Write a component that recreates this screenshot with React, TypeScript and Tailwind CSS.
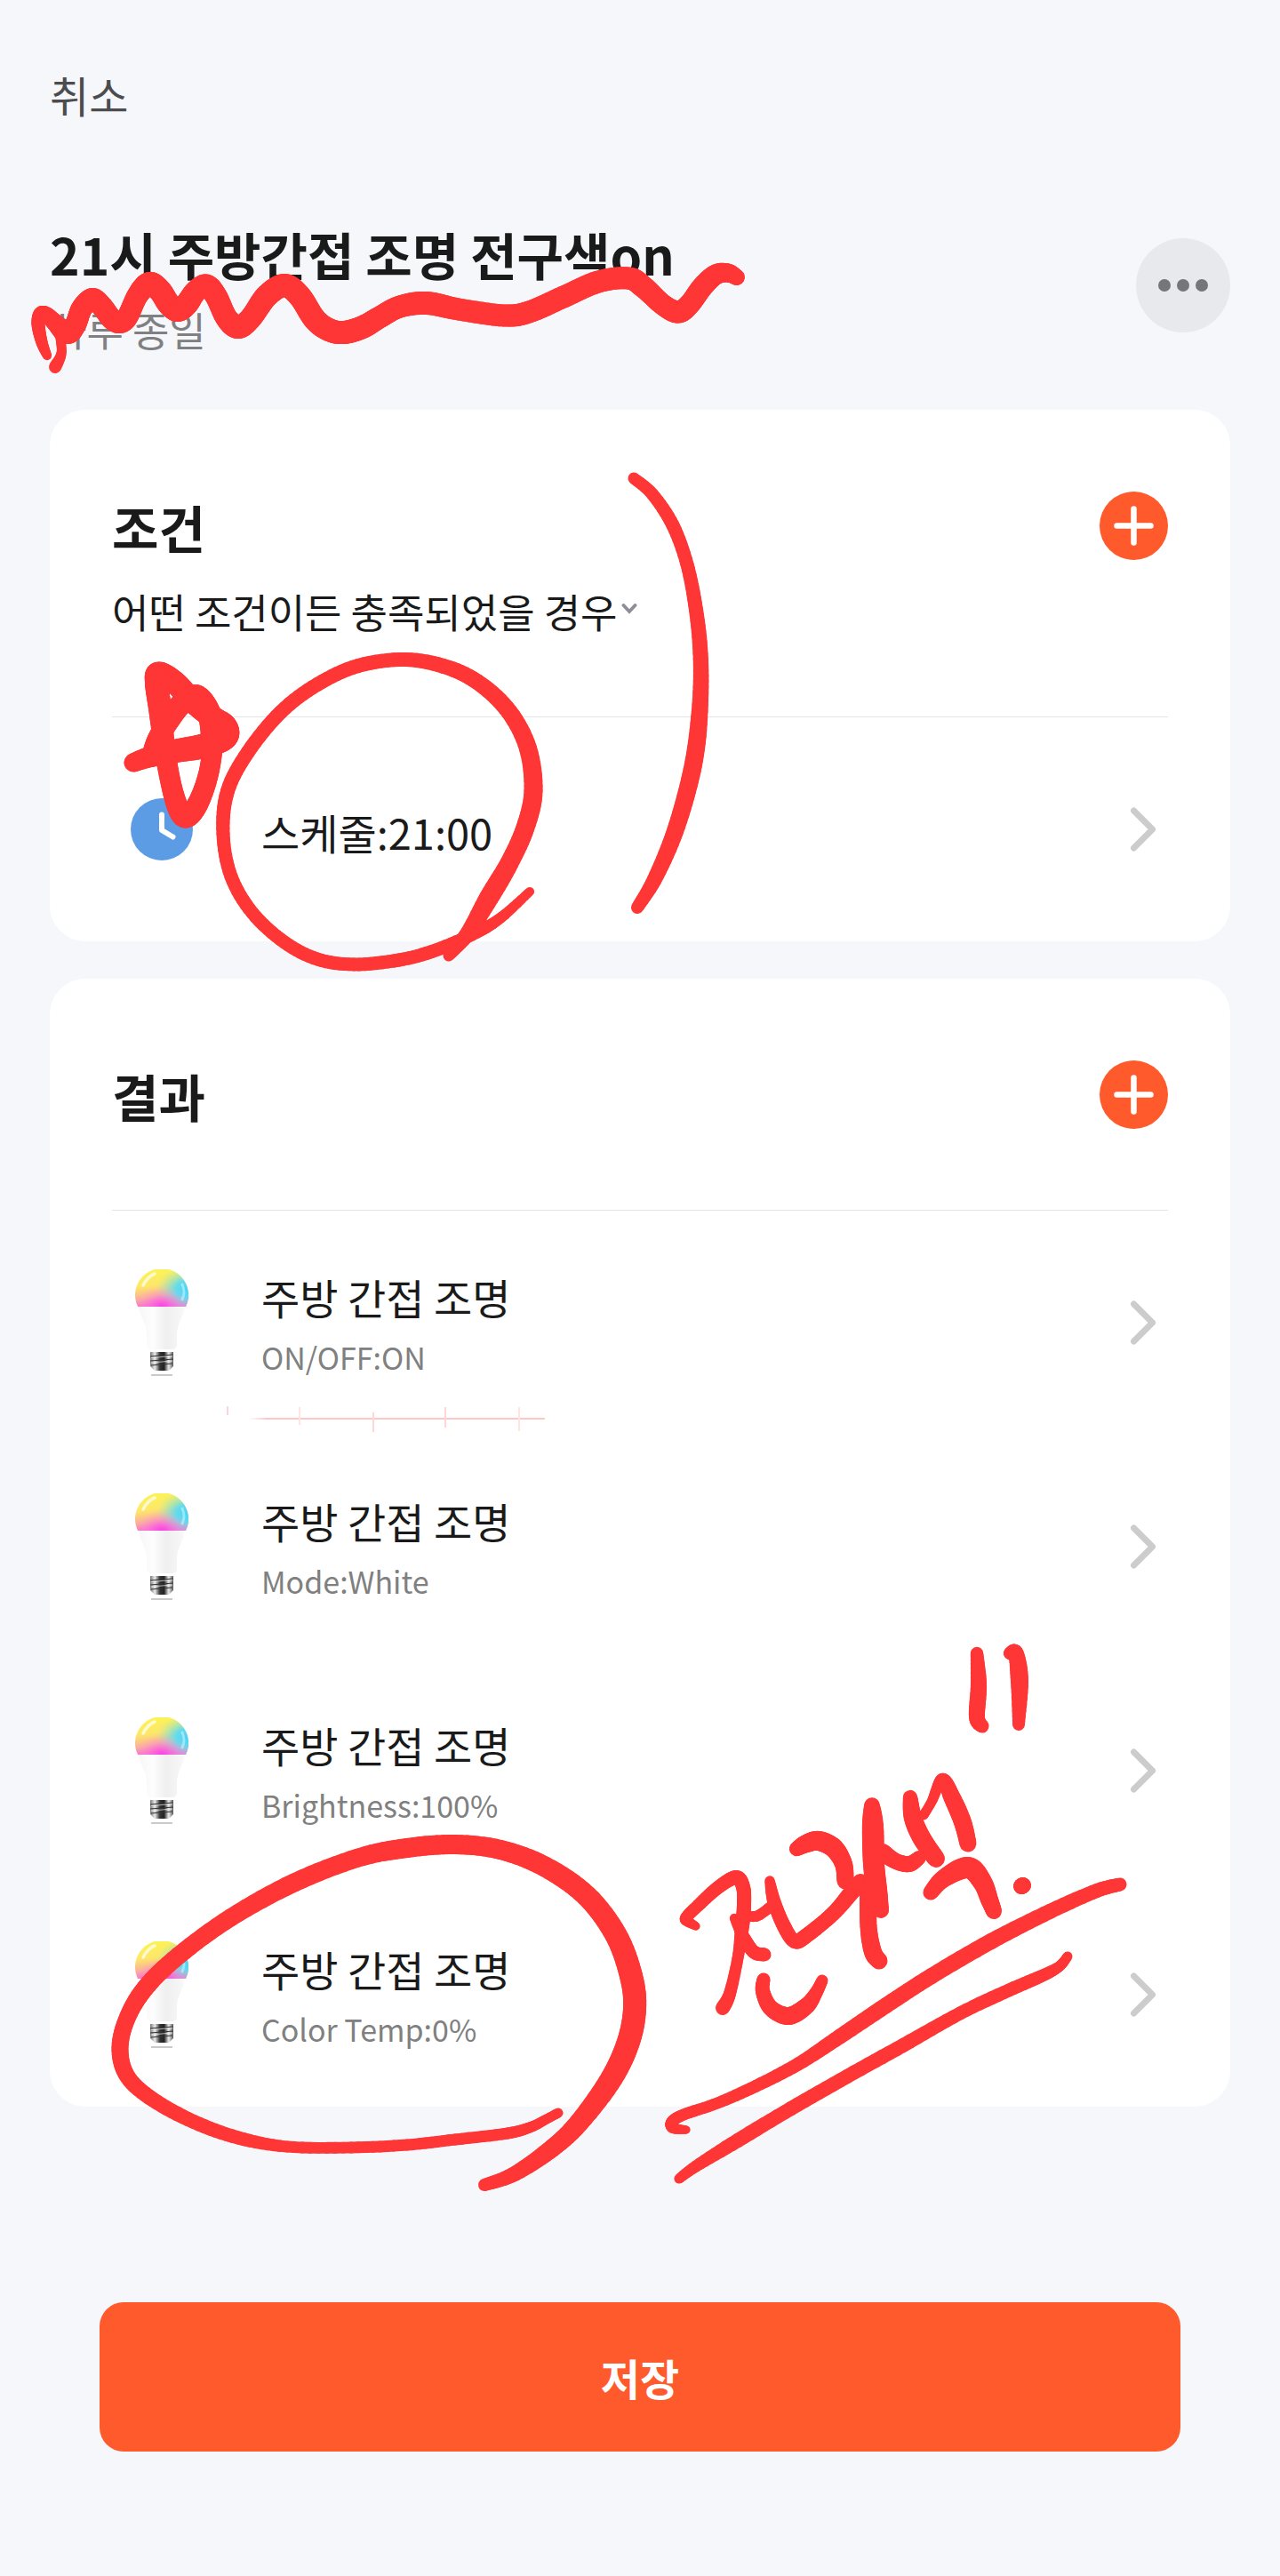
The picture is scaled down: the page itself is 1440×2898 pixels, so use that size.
import React, { useState } from 'react';

interface SceneAction {
  id: number;
  name: string;
  detail: string;
}

type InkPoint = [number, number, number];

const actions: SceneAction[] = [
  { id: 1, name: '주방 간접 조명', detail: 'ON/OFF:ON' },
  { id: 2, name: '주방 간접 조명', detail: 'Mode:White' },
  { id: 3, name: '주방 간접 조명', detail: 'Brightness:100%' },
  { id: 4, name: '주방 간접 조명', detail: 'Color Temp:0%' },
];

// pen strokes as [x, y, pen width]
const strokes: InkPoint[][] = [
  // wave over the title
  [[53, 400, 10], [47, 385, 13], [43, 365, 15], [45, 353, 15], [52, 353, 16], [63, 364, 20], [76, 375, 24], [85, 365, 24], [92, 347, 24], [104, 336, 24], [115, 345, 24], [125, 358, 24], [134, 363, 24], [143, 357, 24], [155, 332, 24], [168, 319, 26], [180, 327, 26], [190, 342, 26], [200, 349, 26], [210, 342, 26], [220, 328, 25], [232, 321, 25], [243, 333, 25], [255, 358, 25], [268, 368, 26], [282, 358, 25], [300, 333, 26], [320, 321, 26], [337, 333, 26], [354, 359, 26], [370, 371, 26], [387, 374, 26], [408, 368, 26], [427, 357, 25], [450, 345, 25], [480, 341, 26], [516, 348, 25], [567, 355, 25], [595, 351, 25], [634, 334, 25], [673, 317, 25], [707, 313, 25], [724, 323, 25], [746, 343, 24], [763, 351, 25], [776, 342, 24], [790, 323, 24], [805, 309, 23], [819, 307, 21], [829, 312, 18]],
  [[68, 380, 11], [69, 398, 11], [62, 413, 14]],
  // closing bracket
  [[713, 538, 13], [734, 556, 14], [757, 591, 15], [773, 635, 15], [783, 686, 16], [788, 735, 17], [788, 786, 18], [783, 842, 20], [773, 890, 20], [757, 942, 19], [736, 990, 17], [717, 1021, 14]],
  // star
  [[150, 858, 21], [167, 852, 23], [197, 845, 26], [230, 839, 28], [252, 829, 30], [252, 818, 30], [240, 808, 27], [218, 790, 26], [197, 768, 26], [179, 758, 27], [176, 768, 26], [180, 797, 26], [185, 840, 24], [192, 880, 23], [200, 908, 24], [209, 919, 25], [221, 907, 24], [232, 880, 23], [238, 850, 23], [238, 817, 26], [233, 797, 26], [220, 783, 26], [204, 792, 25], [189, 812, 24], [176, 834, 23], [169, 852, 20]],
  // circle around the schedule
  [[596, 1003, 10], [564, 1032, 12], [536, 1049, 14], [490, 1069, 15], [449, 1080, 15], [398, 1085, 15], [357, 1079, 15], [320, 1060, 15], [284, 1027, 15], [260, 986, 15], [251, 938, 15], [256, 890, 16], [279, 846, 16], [316, 801, 16], [357, 770, 16], [403, 749, 16], [456, 742, 16], [504, 751, 17], [541, 770, 18], [573, 801, 19], [594, 842, 20], [600, 890, 21], [591, 931, 21], [573, 971, 21], [550, 1010, 22], [527, 1049, 18], [505, 1075, 13]],
  // circle around the color temperature
  [[628, 2377, 11], [613, 2385, 11], [597, 2393, 12], [571, 2400, 13], [512, 2407, 13], [458, 2413, 13], [395, 2416, 13], [323, 2415, 13], [268, 2405, 15], [218, 2387, 16], [172, 2362, 17], [144, 2337, 18], [135, 2307, 19], [142, 2273, 19], [163, 2237, 20], [201, 2200, 20], [260, 2157, 20], [331, 2118, 21], [403, 2090, 21], [458, 2079, 22], [512, 2075, 22], [563, 2081, 22], [613, 2100, 23], [660, 2133, 24], [693, 2177, 25], [710, 2223, 26], [714, 2260, 26], [706, 2300, 26], [685, 2343, 25], [647, 2393, 22], [613, 2423, 20], [576, 2447, 17], [545, 2458, 14]],
  // quote marks
  [[1099, 1860, 14], [1101, 1896, 18], [1099, 1932, 18], [1105, 1942, 15]],
  [[1136, 1860, 14], [1143, 1860, 17], [1147, 1892, 20], [1146, 1940, 14]],
  // handwritten note
  [[783, 2167, 9], [773, 2161, 12], [772, 2157, 13], [783, 2146, 14], [807, 2124, 15], [828, 2112, 16], [836, 2123, 16], [837, 2143, 16], [835, 2167, 16], [830, 2203, 13], [821, 2243, 14], [813, 2259, 16]],
  [[826, 2158, 10], [837, 2180, 14], [848, 2196, 15], [860, 2199, 15]],
  [[843, 2156, 12], [853, 2155, 12], [867, 2145, 12]],
  [[866, 2116, 11], [871, 2140, 15], [882, 2167, 16], [894, 2184, 16], [908, 2177, 17], [937, 2153, 17], [957, 2130, 18], [968, 2117, 18]],
  [[977, 2123, 20], [977, 2167, 19], [982, 2196, 20], [989, 2206, 19]],
  [[859, 2227, 15], [858, 2240, 16], [867, 2259, 18], [887, 2268, 20], [907, 2257, 19], [918, 2242, 15], [925, 2228, 13]],
  [[896, 2080, 16], [907, 2074, 20], [921, 2071, 22], [938, 2079, 22], [949, 2097, 20], [951, 2116, 19]],
  [[981, 2031, 17], [982, 2057, 24], [983, 2097, 24], [987, 2130, 23], [991, 2149, 18]],
  [[993, 2084, 20], [1008, 2094, 18], [1023, 2097, 18], [1034, 2090, 16]],
  [[1024, 2022, 16], [1027, 2045, 20], [1037, 2068, 21], [1053, 2091, 20]],
  [[1039, 2042, 11], [1048, 2027, 11], [1060, 2002, 14], [1071, 2022, 19], [1083, 2050, 20], [1089, 2074, 19]],
  [[1047, 2129, 17], [1062, 2113, 20], [1089, 2101, 24], [1105, 2117, 22], [1113, 2137, 20], [1118, 2150, 18]],
  [[1149, 2122, 18], [1151, 2121, 18]],
  // double underline
  [[772, 2396, 9], [757, 2394, 12], [756, 2387, 13], [769, 2379, 13], [807, 2366, 13], [850, 2347, 14], [898, 2322, 15], [945, 2291, 17], [997, 2256, 18], [1048, 2223, 18], [1115, 2184, 18], [1182, 2150, 17], [1234, 2127, 16], [1260, 2120, 15]],
  [[764, 2451, 11], [783, 2437, 13], [830, 2408, 16], [890, 2372, 16], [953, 2336, 16], [1016, 2301, 16], [1080, 2265, 15], [1135, 2239, 15], [1174, 2222, 14], [1192, 2212, 12], [1201, 2201, 11]],
];

// Catmull-Rom through the points, pen width included
const smooth = (points: InkPoint[], steps = 8): InkPoint[] => {
  const out: InkPoint[] = [];
  for (let i = 0; i < points.length - 1; i++) {
    const p0 = points[Math.max(i - 1, 0)];
    const p1 = points[i];
    const p2 = points[i + 1];
    const p3 = points[Math.min(i + 2, points.length - 1)];
    for (let s = 0; s < steps; s++) {
      const t = s / steps;
      out.push(
        [0, 1, 2].map(
          (k) =>
            0.5 *
            (2 * p1[k] +
              (p2[k] - p0[k]) * t +
              (2 * p0[k] - 5 * p1[k] + 4 * p2[k] - p3[k]) * t * t +
              (3 * p1[k] - p0[k] - 3 * p2[k] + p3[k]) * t * t * t)
        ) as InkPoint
      );
    }
  }
  out.push(points[points.length - 1]);
  return out;
};

const InkStroke: React.FC<{ points: InkPoint[] }> = ({ points }) => {
  const pts = smooth(points);
  return (
    <g>
      {pts.slice(1).map((p, i) => (
        <line key={i} x1={pts[i][0]} y1={pts[i][1]} x2={p[0]} y2={p[1]} strokeWidth={p[2]} />
      ))}
    </g>
  );
};

const InkLayer: React.FC = () => (
  <svg
    className="absolute top-0 left-0 w-full pointer-events-none"
    viewBox="0 0 1440 2898"
    fill="none"
    aria-hidden="true"
  >
    <defs>
      <linearGradient id="guide" gradientUnits="userSpaceOnUse" x1="280" y1="0" x2="300" y2="0">
        <stop offset="0" stopColor="#ffc6c6" stopOpacity="0" />
        <stop offset="1" stopColor="#ffc6c6" />
      </linearGradient>
    </defs>
    <rect x="280" y="1595" width="333" height="2" fill="url(#guide)" />
    <path d="M256 1582v10M420 1589v22M501 1583v23" stroke="#ffd6d6" strokeWidth="2" />
    <path d="M337 1583v20M584 1583v27" stroke="#ffe4e4" strokeWidth="2" />
    <g stroke="#ff3636" strokeLinecap="round">
      {strokes.map((points, i) => (
        <InkStroke key={i} points={points} />
      ))}
    </g>
  </svg>
);

const ChevronIcon: React.FC = () => (
  <svg className="w-7 h-[50px] mr-[14px] shrink-0" viewBox="0 0 28 50" fill="none">
    <path d="M3.5 4L24.5 25L3.5 46" stroke="#cccccc" strokeWidth="7" strokeLinecap="round" strokeLinejoin="round" />
  </svg>
);

const ClockIcon: React.FC = () => (
  <svg className="w-[70px] h-[70px]" viewBox="0 0 70 70" fill="none">
    <circle cx="35" cy="35" r="35" fill="#5c9ce4" />
    <path d="M35 18.5V36L47.5 43.5" stroke="#ffffff" strokeWidth="6" strokeLinecap="round" strokeLinejoin="round" />
  </svg>
);

const BulbIcon: React.FC<{ id: number }> = ({ id }) => (
  <svg className="w-15 h-30" viewBox="0 0 60 120">
    <defs>
      <linearGradient id={`base-${id}`} x1="0.2" y1="0" x2="0.4" y2="1">
        <stop offset="0" stopColor="#fbf552" />
        <stop offset="0.45" stopColor="#fde76a" />
        <stop offset="0.75" stopColor="#fbae9c" />
        <stop offset="1" stopColor="#f95fd8" />
      </linearGradient>
      <radialGradient id={`cyan-${id}`} cx="1" cy="0.55" r="0.6">
        <stop offset="0" stopColor="#45d4fb" />
        <stop offset="0.4" stopColor="#5fdcf0" stopOpacity="0.95" />
        <stop offset="1" stopColor="#a8e8b8" stopOpacity="0" />
      </radialGradient>
      <radialGradient id={`pink-${id}`} cx="0.5" cy="1" r="0.5">
        <stop offset="0" stopColor="#fb3fe6" />
        <stop offset="1" stopColor="#fba0d8" stopOpacity="0" />
      </radialGradient>
      <linearGradient id={`body-${id}`} x1="0" y1="0" x2="1" y2="0">
        <stop offset="0" stopColor="#f6f6f6" />
        <stop offset="0.3" stopColor="#fdfdfd" />
        <stop offset="0.6" stopColor="#efefef" />
        <stop offset="1" stopColor="#f9f9f9" />
      </linearGradient>
      <linearGradient id={`metal-${id}`} x1="0" y1="0" x2="1" y2="0">
        <stop offset="0" stopColor="#777777" />
        <stop offset="0.2" stopColor="#eeeeee" />
        <stop offset="0.42" stopColor="#333333" />
        <stop offset="0.6" stopColor="#222222" />
        <stop offset="0.8" stopColor="#eeeeee" />
        <stop offset="1" stopColor="#555555" />
      </linearGradient>
    </defs>
    <path d="M3 42A30 30 0 1 1 57 42Z" fill={`url(#base-${id})`} />
    <path d="M3 42A30 30 0 1 1 57 42Z" fill={`url(#cyan-${id})`} />
    <path d="M3 42A30 30 0 1 1 57 42Z" fill={`url(#pink-${id})`} />
    <path d="M9 18Q14 8 22 5" fill="none" stroke="#ffffff" strokeOpacity="0.7" strokeWidth="3.5" strokeLinecap="round" />
    <path d="M53 17Q57 26 53 34" fill="none" stroke="#ffffff" strokeOpacity="0.4" strokeWidth="3" strokeLinecap="round" />
    <path d="M4 42H56C54 54 47 62 47 74V86Q46 90 42 90H18Q14 90 13 86V74C13 62 6 54 4 42Z" fill={`url(#body-${id})`} />
    <path d="M17 93H43V109L38 114H22L17 109Z" fill={`url(#metal-${id})`} />
    <path d="M17 98L43 96M17 103L43 101M18 108L42 106" stroke="#333333" strokeWidth="1.2" />
    <path d="M18 99.5L42 97.5M18 105L42 103" stroke="#f0f0f0" strokeOpacity="0.7" strokeWidth="1" />
    <path d="M18 119H42" stroke="#bdbdbd" strokeWidth="1.6" />
  </svg>
);

const AddButton: React.FC<{ label: string }> = ({ label }) => (
  <button aria-label={label} className="rounded-full shrink-0">
    <svg className="w-[77px] h-[77px]" viewBox="0 0 77 77" fill="none">
      <circle cx="38.5" cy="38.5" r="38.5" fill="#ff5a2b" />
      <path d="M38.5 19.5V57.5M19.5 38.5H57.5" stroke="#ffffff" strokeWidth="6.5" strokeLinecap="round" />
    </svg>
  </button>
);

interface RowProps {
  icon: React.ReactNode;
  name: string;
  detail?: string;
}

const Row: React.FC<RowProps> = ({ icon, name, detail }) => (
  <button className="w-full h-[252px] flex items-center text-left">
    <span className="w-28 mr-14 flex justify-center shrink-0">{icon}</span>
    <span className="flex-1 min-w-0 pt-1.5">
      <span className="block text-[47px] leading-[64px] text-[#1a1a1a]">{name}</span>
      {detail && <span className="block mt-2 text-[34px] leading-[56px] text-[#808080]">{detail}</span>}
    </span>
    <ChevronIcon />
  </button>
);

export default function App() {
  const [match, setMatch] = useState('any');

  return (
    <div className="relative min-h-screen bg-[#f5f7fb] px-14 pt-[78px] pb-[140px] font-['Noto_Sans_CJK_KR',sans-serif]">
      <button className="block text-[48px] leading-[56px] text-[#4c4c4e]">취소</button>

      <header className="mt-[115px] flex items-start justify-between">
        <div>
          <h1 className="text-[57px] leading-[72px] font-bold text-[#1a1a1a]">21시 주방간접 조명 전구색on</h1>
          <p className="mt-[18px] text-[45px] leading-[64px] text-[#808082]">하루 종일</p>
        </div>
        <button aria-label="더보기" className="mt-[19px] w-[106px] h-[106px] rounded-full bg-[#e8e9ed] flex items-center justify-center gap-[7px]">
          <span className="w-[14px] h-[14px] rounded-full bg-[#757678]" />
          <span className="w-[14px] h-[14px] rounded-full bg-[#757678]" />
          <span className="w-[14px] h-[14px] rounded-full bg-[#757678]" />
        </button>
      </header>

      <main>
        <section className="mt-[58px] bg-white rounded-[40px] px-[70px]">
          <div className="pt-[92px] pb-[86px] border-b border-[#e5e5e5]">
            <div className="h-[77px] flex items-center justify-between">
              <h2 className="text-[57px] leading-[72px] font-bold text-[#1a1a1a]">조건</h2>
              <AddButton label="조건 추가" />
            </div>
            <div className="mt-[26px] flex items-center gap-1">
              <select
                aria-label="조건 충족 방식"
                value={match}
                onChange={(e) => setMatch(e.target.value)}
                className="appearance-none bg-transparent text-[45px] leading-[64px] text-[#1a1a1a]"
              >
                <option value="any">어떤 조건이든 충족되었을 경우</option>
              </select>
              <svg className="w-[18px] h-3 mb-1.5 shrink-0" viewBox="0 0 18 12" fill="none">
                <path d="M2.5 2L9 9L15.5 2" stroke="#8e8e98" strokeWidth="3.8" strokeLinecap="round" />
              </svg>
            </div>
          </div>
          <Row icon={<ClockIcon />} name="스케줄:21:00" />
        </section>

        <section className="mt-[42px] bg-white rounded-[40px] px-[70px]">
          <div className="pt-[92px] pb-[91px] border-b border-[#e5e5e5]">
            <div className="h-[77px] flex items-center justify-between">
              <h2 className="text-[57px] leading-[72px] font-bold text-[#1a1a1a]">결과</h2>
              <AddButton label="결과 추가" />
            </div>
          </div>
          {actions.map((action) => (
            <Row key={action.id} icon={<BulbIcon id={action.id} />} name={action.name} detail={action.detail} />
          ))}
        </section>
      </main>

      <div className="mt-[220px] px-14">
        <button className="w-full h-[168px] rounded-[27px] bg-[#ff5a2b] text-[48px] leading-[64px] font-bold text-white">저장</button>
      </div>

      <InkLayer />
    </div>
  );
}
